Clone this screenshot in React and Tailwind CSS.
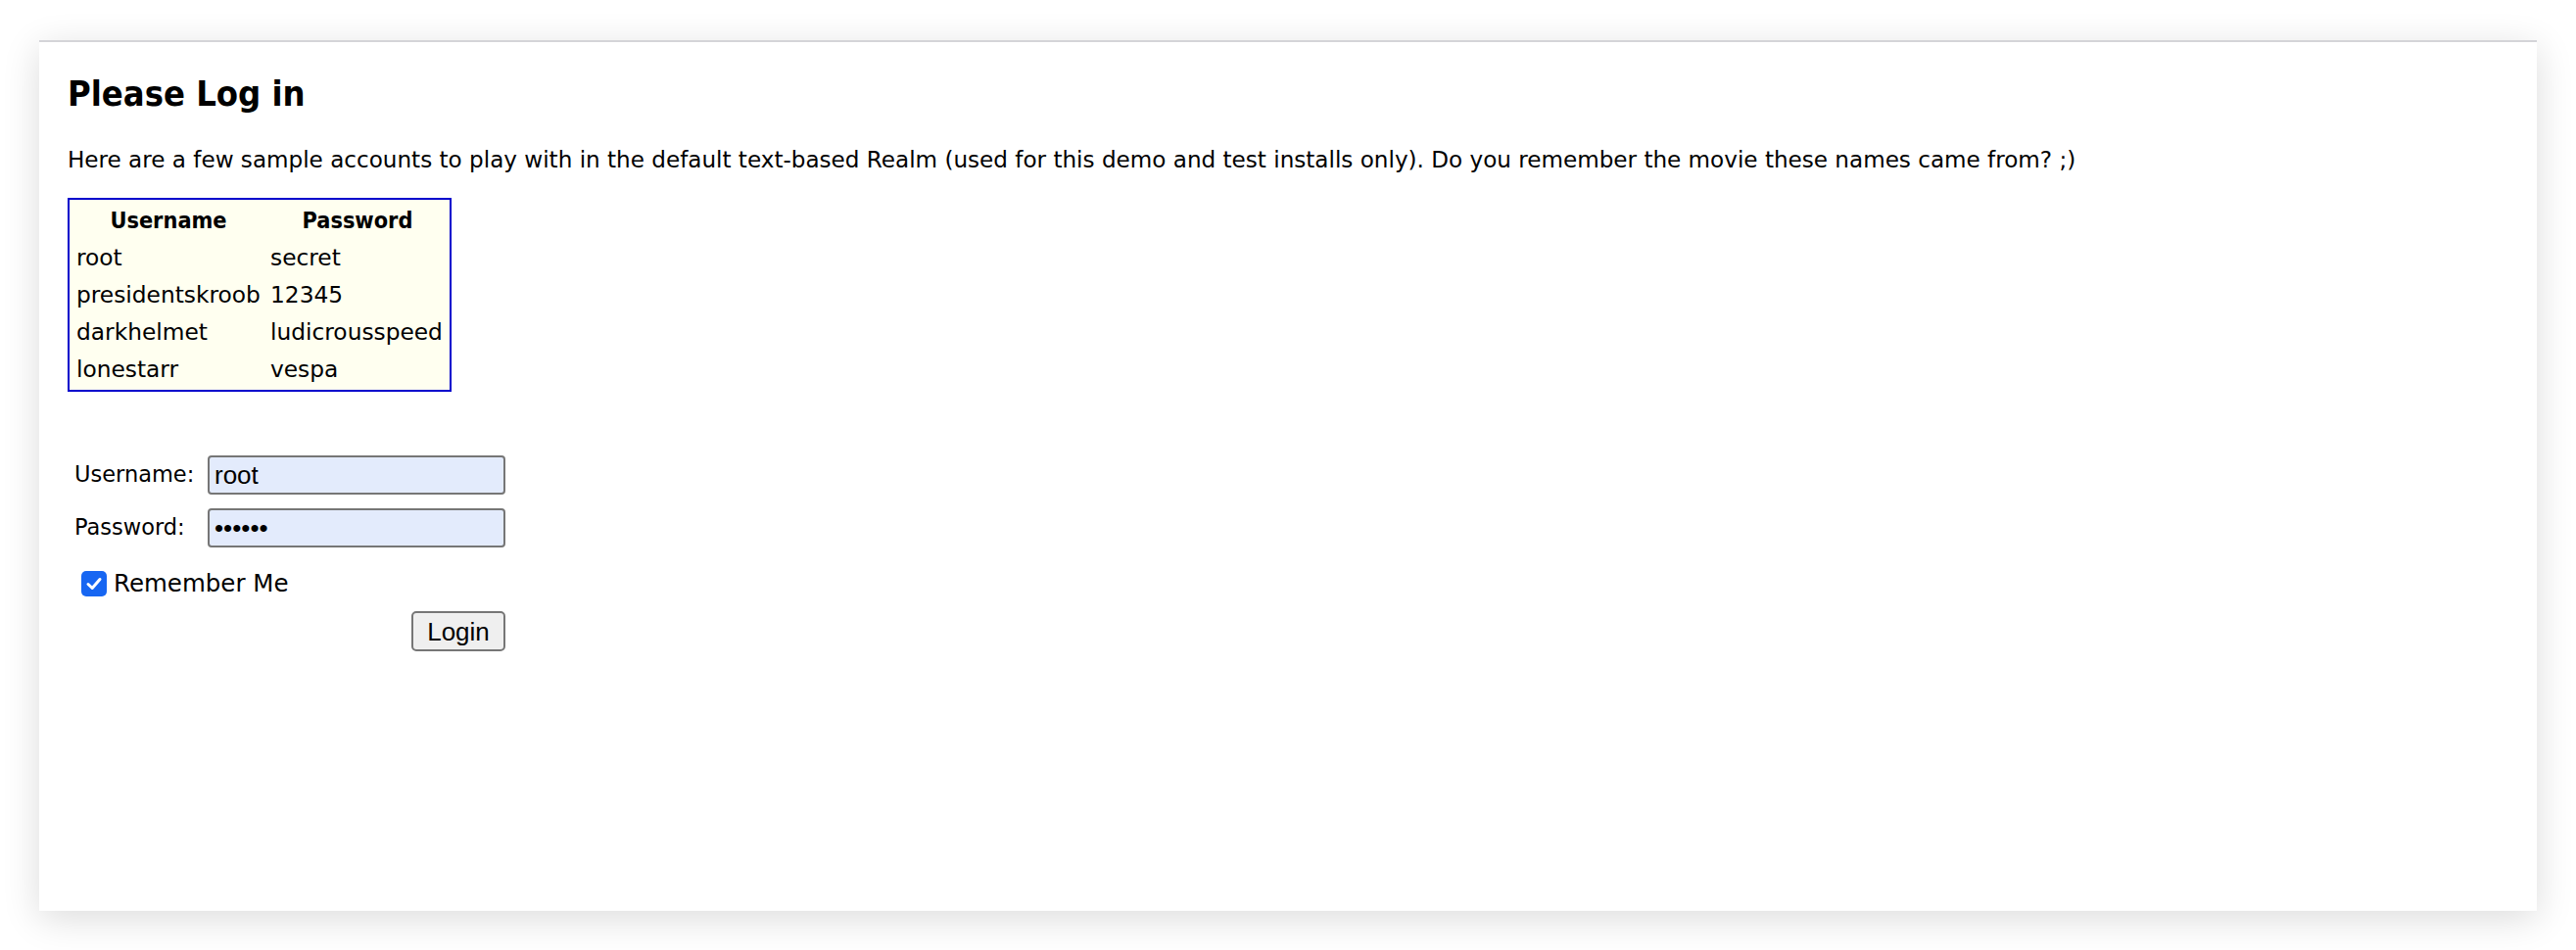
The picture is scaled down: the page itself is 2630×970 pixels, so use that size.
import React from "react";

const rows = [
  ["root", "secret"],
  ["presidentskroob", "12345"],
  ["darkhelmet", "ludicrousspeed"],
  ["lonestarr", "vespa"],
];

export default function App() {
  return (
    <div className="min-h-screen bg-white pt-[41px] px-[40px] font-['DejaVu_Sans',sans-serif] text-black">
      <div className="h-[889px] bg-white border-t-2 border-[#d4d4d8] shadow-[0_8px_36px_rgba(0,0,0,0.14)] pl-[29px] pt-[31px]">
        <h1 className="font-['DejaVu_Sans_Condensed','DejaVu_Sans',sans-serif] font-stretch-condensed font-bold text-[36px] leading-[44px]">
          Please Log in
        </h1>
        <p className="mt-[30px] text-[23.1px] leading-[30px]">
          Here are a few sample accounts to play with in the default text-based Realm (used for this demo and test installs only). Do you remember the movie these names came from? ;)
        </p>

        <div className="mt-[24px] w-[392px] border-2 border-[#0000cc] bg-[#fffff0] p-[2px] text-[23.3px] leading-[38px]">
          <div className="grid grid-cols-[198px_188px]">
            <div className="text-center font-bold font-['DejaVu_Sans_Condensed','DejaVu_Sans',sans-serif] font-stretch-condensed">Username</div>
            <div className="text-center font-bold font-['DejaVu_Sans_Condensed','DejaVu_Sans',sans-serif] font-stretch-condensed">Password</div>
            {rows.map(([u, p]) => (
              <React.Fragment key={u}>
                <div className="pl-[5px] whitespace-nowrap">{u}</div>
                <div className="pl-[5px] whitespace-nowrap">{p}</div>
              </React.Fragment>
            ))}
          </div>
        </div>

        <form className="mt-[65px] w-[447px]" onSubmit={(e) => e.preventDefault()}>
          <div className="flex flex-col gap-[14px]">
            <div className="flex items-center">
              <label className="w-[143px] pl-[7px] text-[22.5px]">Username:</label>
              <input
                type="text"
                defaultValue="root"
                className="w-[304px] h-[40px] border-2 border-[#767676] rounded-[4px] bg-[#e3ebfc] pl-[5px] font-['Liberation_Sans',Arial,sans-serif] text-[26px] outline-none"
              />
            </div>
            <div className="flex items-center">
              <label className="w-[143px] pl-[7px] text-[22.5px]">Password:</label>
              <input
                type="password"
                defaultValue="secret"
                className="w-[304px] h-[40px] border-2 border-[#767676] rounded-[4px] bg-[#e3ebfc] pl-[5px] font-['Liberation_Sans',Arial,sans-serif] text-[26px] outline-none"
              />
            </div>
          </div>

          <div className="mt-[24px] flex items-center pl-[14px]">
            <span className="w-[26px] h-[26px] rounded-[5px] bg-[#1766f2] flex items-center justify-center">
              <svg width="18" height="18" viewBox="0 0 18 18" fill="none">
                <path d="M3 9.5 L7.2 13.5 L15 4.5" stroke="white" strokeWidth="3" strokeLinecap="round" strokeLinejoin="round" />
              </svg>
            </span>
            <span className="ml-[7px] text-[24.5px] leading-[26px]">Remember Me</span>
          </div>

          <div className="mt-[15px] flex justify-end">
            <button
              type="submit"
              className="w-[96px] h-[41px] bg-[#efefef] border-2 border-[#767676] rounded-[5px] font-['Liberation_Sans',Arial,sans-serif] text-[26px] leading-none"
            >
              Login
            </button>
          </div>
        </form>
      </div>
    </div>
  );
}
